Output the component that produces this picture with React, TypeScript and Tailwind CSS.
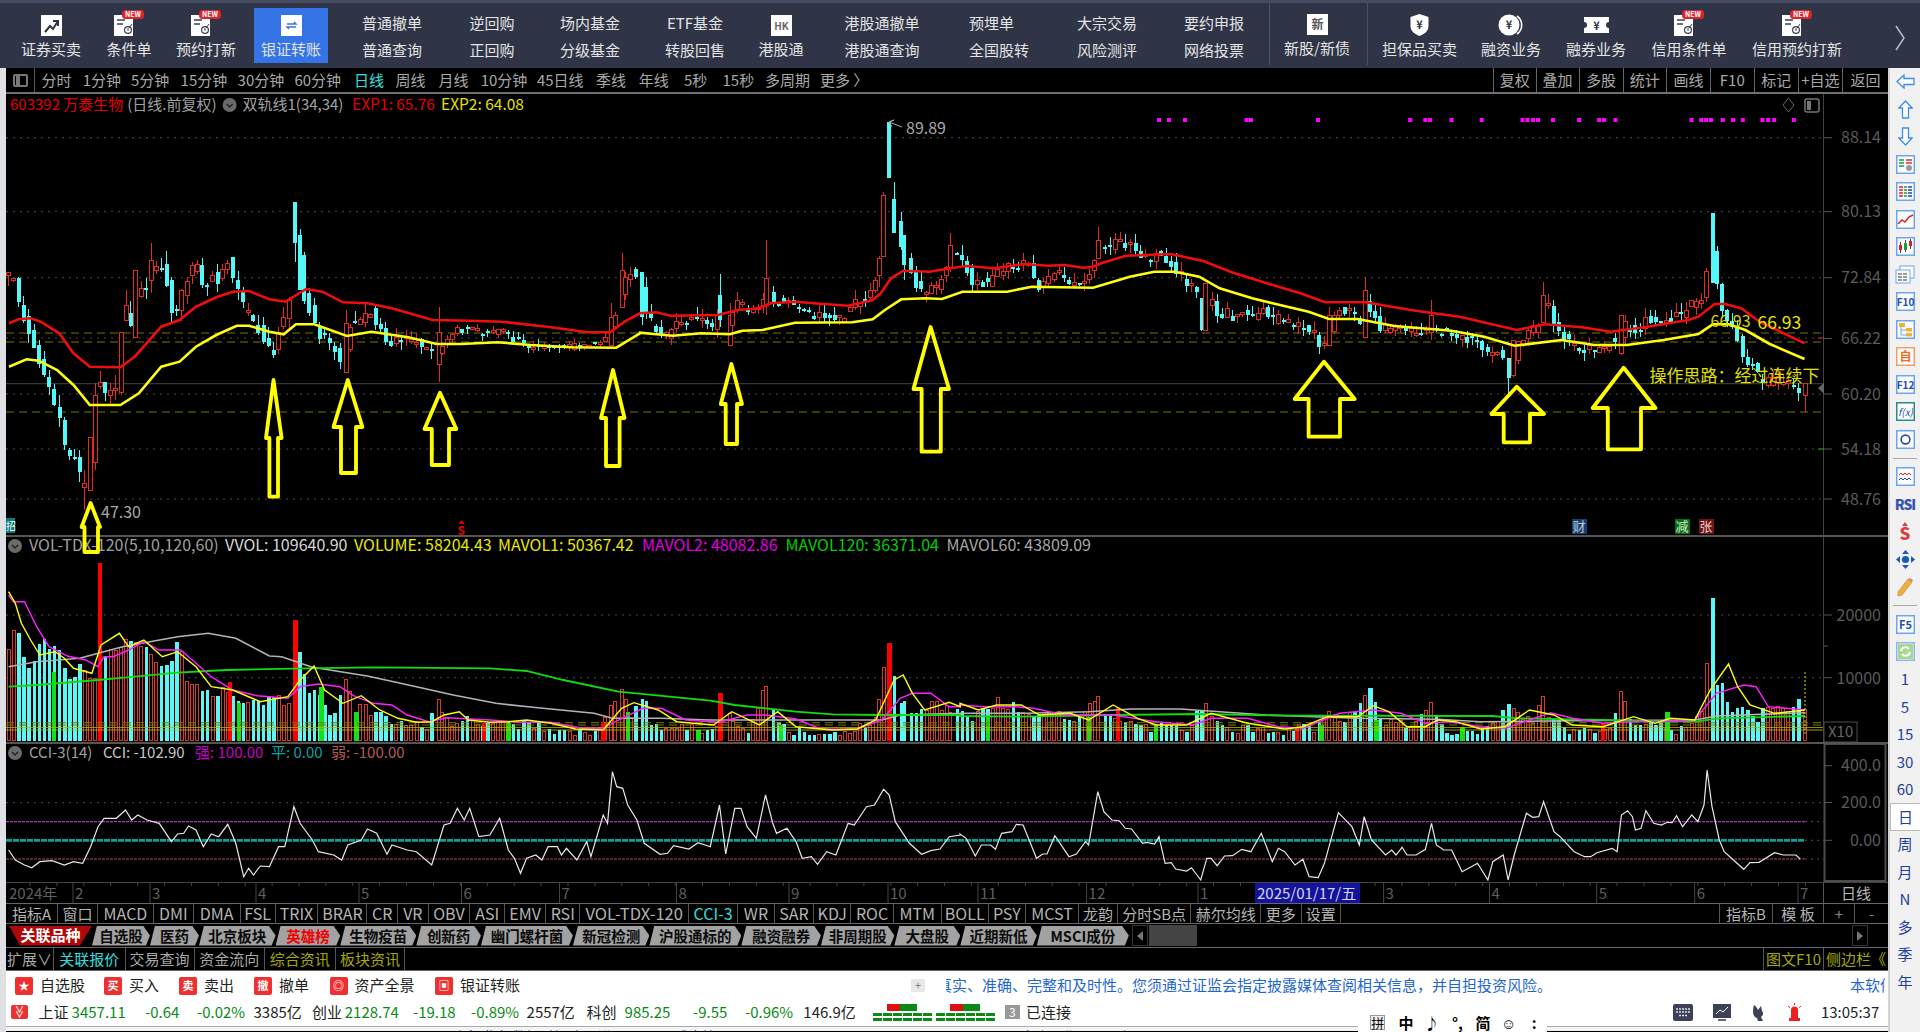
import type { ReactNode } from "react";

type Pt = [number, number];

// chart points were read off zoomed crops, so they are kept in crop space
const mainPts = (pts: Pt[], ox: number): Pt[] => pts.map(([x, y]) => [ox + x / 2.45, 90 + y / 3]);
const lowPts = (pts: Pt[], ox: number): Pt[] => pts.map(([x, y]) => [ox + x / 1.633, 530 + y / 3]);
const poly = (pts: Pt[]) => pts.map(([x, y]) => `${x.toFixed(1)},${y.toFixed(1)}`).join(" ");

const lerp = (pts: Pt[], x: number) => {
  if (x <= pts[0][0]) return pts[0][1];
  for (let i = 1; i < pts.length; i++) {
    if (x <= pts[i][0]) {
      const t = (x - pts[i - 1][0]) / (pts[i][0] - pts[i - 1][0]);
      return pts[i - 1][1] + t * (pts[i][1] - pts[i - 1][1]);
    }
  }
  return pts[pts.length - 1][1];
};

let seed = 20250117;
const rnd = () => {
  seed = (seed + 0x6d2b79f5) | 0;
  let t = Math.imul(seed ^ (seed >>> 15), 1 | seed);
  t = (t + Math.imul(t ^ (t >>> 7), 61 | t)) ^ t;
  return ((t ^ (t >>> 14)) >>> 0) / 4294967296;
};

const pricePath: Pt[] = [[9,275],[14,280],[20,307],[29,330],[35,347],[44,377],[53,398],[60,417],[65,447],[75,458],[80,473],[85,487],[90,460],[95,393],[100,377],[105,390],[110,392],[116,393],[121,363],[126,317],[131,323],[135,303],[141,283],[146,290],[151,270],[156,270],[162,267],[168,287],[173,320],[177,307],[182,290],[187,277],[192,267],[197,267],[203,287],[207,287],[212,277],[217,280],[223,270],[229,260],[234,280],[239,298],[244,310],[249,317],[254,323],[259,330],[264,337],[269,353],[275,353],[280,323],[285,323],[290,300],[295,223],[300,260],[305,303],[310,310],[315,323],[320,338],[325,340],[331,347],[336,350],[341,365],[346,343],[351,322],[356,325],[361,317],[366,313],[371,310],[376,323],[383,330],[388,347],[393,340],[398,340],[407,340],[417,342],[428,350],[433,357],[439,350],[445,340],[457,330],[469,330],[490,333],[504,330],[514,340],[530,347],[571,347],[604,340],[611,327],[617,310],[622,287],[627,273],[633,270],[642,293],[648,320],[654,323],[659,337],[664,338],[675,323],[681,320],[693,320],[705,323],[715,328],[720,307],[725,333],[730,323],[735,307],[740,303],[750,313],[761,307],[766,290],[771,298],[776,303],[786,298],[796,305],[801,313],[811,317],[822,317],[832,320],[844,317],[852,303],[862,300],[873,287],[879,265],[884,223],[889,150],[894,217],[898,233],[904,253],[915,282],[922,293],[930,290],[936,287],[940,278],[945,272],[950,253],[955,253],[960,257],[965,267],[971,280],[981,283],[991,282],[1001,270],[1006,263],[1011,268],[1017,267],[1027,263],[1033,278],[1038,287],[1052,277],[1057,272],[1062,278],[1073,285],[1083,280],[1093,265],[1098,250],[1104,243],[1113,247],[1119,238],[1124,245],[1135,247],[1140,258],[1150,258],[1160,250],[1165,260],[1171,263],[1175,268],[1187,282],[1196,290],[1202,313],[1206,303],[1211,300],[1216,317],[1227,312],[1232,317],[1242,313],[1252,317],[1262,310],[1273,320],[1282,318],[1292,323],[1304,327],[1315,335],[1319,345],[1324,345],[1329,330],[1333,313],[1339,310],[1349,310],[1360,320],[1365,303],[1370,313],[1380,327],[1390,330],[1406,330],[1415,335],[1431,327],[1437,330],[1447,333],[1464,338],[1480,343],[1488,355],[1498,350],[1509,367],[1513,360],[1519,343],[1529,332],[1539,327],[1543,303],[1549,307],[1554,323],[1566,340],[1580,350],[1602,348],[1621,333],[1627,323],[1637,335],[1645,320],[1662,323],[1672,317],[1684,313],[1692,303],[1702,297],[1713,247],[1719,303],[1724,312],[1733,333],[1739,343],[1744,358],[1749,362],[1754,367],[1760,380],[1764,383],[1776,378],[1786,383],[1795,385],[1800,392],[1805,390]];

// x, bodyTop, bodyBottom, wickTop, wickBottom, red?
const bigCandles: [number, number, number, number, number, boolean][] = [
  [90,437,490,437,490,true],[84.5,483,487,470,510,true],[121,332,392,332,395,true],[135.5,270,337,270,337,true],[126,305,320,290,320,true],[151,260,280,243,293,true],
  [295,202,243,202,262,false],[300,235,290,229,290,false],[346,323,372,310,372,true],[439,332,364,307,382,true],[611,317,345,303,345,true],[622,270,307,253,307,true],
  [642,272,317,272,325,false],[720,295,320,274,327,false],[730,315,345,303,345,true],[766,278,305,240,315,true],[883.7,195,256,192,256,true],[889,122,178,122,178,false],
  [894,199,233,182,233,false],[898,215,243,214,253,false],[904,235,265,235,280,false],[879,258,275,256,287,true],[950,245,267,233,272,true],[1098,240,258,227,258,true],
  [1201.6,298,330,298,331,false],[1205.7,283,330,283,330,true],[1329,315,345,307,345,true],[1365,290,337,277,337,true],[1431,315,332,300,340,true],[1508.6,358,378,358,394,false],
  [1513.5,340,375,340,377,true],[1543,295,322,282,322,true],[1621,315,353,315,355,true],[1712.6,213,283,213,283,false],[1805,383,395,383,412,true],
];

const PITCH = 5.1;
const candles = Array.from({ length: 353 }, (_, i) => {
  const x = 8.5 + i * PITCH;
  const big = bigCandles.find((c) => Math.abs(c[0] - x) <= PITCH / 2);
  if (big) return { x: big[0], top: big[1], bot: big[2], wt: big[3], wb: big[4], red: big[5] };
  const amp = x < 300 ? 12 : x < 440 ? 9 : x < 620 ? 6 : 9;
  const open = lerp(pricePath, x - PITCH) + (rnd() - 0.5) * amp;
  const close = lerp(pricePath, x) + (rnd() - 0.5) * amp;
  const red = close < open;
  const top = Math.min(open, close);
  const bot = Math.max(Math.max(open, close), top + 2);
  return { x, top, bot, wt: top - rnd() * amp * 1.1, wb: bot + rnd() * amp * 0.9, red };
});

const redLine = [
  ...mainPts([[22,700],[45,688],[75,685],[100,695],[145,730],[180,790],[220,830],[295,832],[330,800],[395,710],[440,690],[480,650],[530,622],[570,605],[610,603],[660,628],[700,635],[750,597],[790,605],[840,637],[900,640],[960,655],[1060,690],[1150,692],[1230,695],[1350,712],[1440,727],[1495,727],[1530,695],[1568,670]], 0),
  ...mainPts([[0,670],[40,667],[75,677],[190,675],[240,660],[290,655],[320,640],[380,635],[450,642],[510,647],[570,630],[590,610],[615,565],[645,542],[710,545],[760,535],[800,528],[870,535],[940,522],[1000,527],[1040,525],[1085,533],[1110,530],[1130,520],[1190,497],[1300,492],[1380,513],[1450,547],[1568,592]], 640),
  ...mainPts([[0,592],[50,610],[110,637],[210,637],[320,660],[440,680],[580,720],[650,703],[740,712],[810,725],[900,710],[1000,690],[1025,680],[1065,642],[1090,642],[1130,655],[1175,695],[1285,760]], 1280),
];
const yellowLine = [
  ...mainPts([[22,830],[65,808],[95,812],[140,840],[180,885],[220,945],[295,945],[340,910],[395,830],[440,815],[480,770],[530,735],[580,707],[610,707],[660,725],[695,733],[725,703],[770,703],[850,738],[910,725],[1000,742],[1070,762],[1130,762],[1220,757],[1300,765],[1400,772],[1510,773],[1568,730]], 0),
  ...mainPts([[0,728],[80,737],[150,730],[220,733],[250,722],[300,720],[380,698],[520,697],[570,688],[600,660],[640,628],[700,625],[740,627],[790,605],[900,605],[960,590],[1110,593],[1200,560],[1260,545],[1310,545],[1370,560],[1420,595],[1500,625],[1568,645]], 640),
  ...mainPts([[0,645],[70,665],[120,687],[190,687],[280,708],[420,722],[500,740],[575,767],[690,750],[770,765],[850,765],[940,750],[1025,732],[1060,703],[1100,703],[1140,720],[1200,762],[1285,807]], 1280),
];

const pinkDots = [1159,1169,1185,1246.5,1251,...[93,319,356,368,420,494,594,606,620,632,669,733,782,794,822,1008,1032,1044,1056,1085,1110,1134,1182,1196,1211,1259].map((x) => 1280 + x / 2.45)];

const volEnvelope = [
  ...lowPts([[15,340],[25,260],[35,340],[50,430],[60,350],[70,320],[85,340],[100,340],[110,440],[120,430],[130,390],[150,440],[165,430],[175,330],[190,340],[205,315],[220,330],[235,325],[250,380],[265,385],[280,380],[290,300],[305,430],[325,470],[340,470],[350,495],[365,460],[380,480],[395,515],[415,490],[430,520],[450,470],[465,530],[480,480],[490,365],[505,475],[520,470],[535,540],[550,520],[565,430],[580,540],[595,500],[610,545],[625,540],[640,570],[660,575],[680,570],[700,575],[715,490],[725,545],[745,580],[765,540],[780,575],[800,570],[820,555],[840,580],[860,565],[880,580],[900,590],[920,595],[940,600],[960,600],[985,575],[1000,505],[1015,465],[1030,545],[1050,485],[1065,570],[1085,575],[1110,580],[1130,580],[1150,595],[1165,585],[1176,560],[1190,540],[1210,580],[1225,590],[1250,455],[1265,540],[1280,580],[1300,590],[1320,590],[1340,600],[1360,605],[1380,600],[1410,570],[1430,560],[1442,385],[1452,500],[1460,425],[1470,490],[1485,535],[1500,545],[1520,500],[1540,525],[1560,520]], 0),
  ...lowPts([[5,525],[20,550],[50,520],[65,487],[75,530],[90,510],[105,545],[120,560],[150,520],[160,540],[185,580],[215,495],[226,495],[240,545],[258,560],[275,570],[300,575],[320,585],[335,560],[355,580],[370,585],[400,505],[420,560],[440,590],[470,585],[500,590],[530,600],[560,565],[580,590],[600,530],[610,545],[630,560],[660,485],[670,475],[690,565],[720,570],[735,590],[770,510],[780,550],[795,595],[815,590],[840,600],[870,580],[895,510],[905,515],[935,570],[953,483],[965,560],[1000,590],[1030,580],[1060,590],[1080,480],[1100,580],[1120,570],[1140,560],[1155,580],[1175,590],[1195,560],[1211,540],[1220,560],[1229,560],[1240,410],[1250,480],[1260,525],[1275,520],[1283,510],[1298,565],[1310,530],[1330,515],[1345,530],[1370,505],[1378,515]], 960),
];
const volBars = candles.map((c) => ({ x: c.x, top: Math.min(lerp(volEnvelope, c.x) + rnd() * 9, 735), red: c.red }));

// R solid red, G solid green, C solid cyan, H hollow red
const volSpecial: [number, number, string][] = [
  ...lowPts([[163,100],[482,270],[375,455],[1176,490],[1452,340],[985,575],[790,580]], 0).map(([x, y]): [number, number, string] => [x, y, "R"]),
  ...lowPts([[258,535],[1050,580],[550,590]], 960).map(([x, y]): [number, number, string] => [x, y, "R"]),
  ...lowPts([[88,425],[390,520],[525,470],[582,545],[830,580],[1025,545],[1140,600],[1275,585]], 0).map(([x, y]): [number, number, string] => [x, y, "G"]),
  ...lowPts([[45,560],[210,560],[320,585],[590,585],[680,570],[820,590],[1155,545]], 960).map(([x, y]): [number, number, string] => [x, y, "G"]),
  ...lowPts([[1229,205],[670,475]], 960).map(([x, y]): [number, number, string] => [x, y, "C"]),
  ...lowPts([[490,365]], 0).map(([x, y]): [number, number, string] => [x, y, "C"]),
  ...lowPts([[1220,400]], 960).map(([x, y]): [number, number, string] => [x, y, "H"]),
];

const volYellow = [
  ...lowPts([[14,185],[25,220],[35,280],[50,330],[65,375],[90,365],[105,385],[120,415],[150,430],[165,345],[195,310],[210,350],[235,330],[265,380],[290,365],[320,410],[345,470],[380,480],[425,515],[470,500],[490,450],[513,408],[530,480],[560,520],[590,497],[620,540],[650,565],[680,577],[705,575],[725,555],[750,545],[765,570],[800,577],[830,575],[860,570],[900,580],[940,597],[985,600],[1015,535],[1035,518],[1075,540],[1105,575],[1165,585],[1195,545],[1240,585],[1270,545],[1300,590],[1360,600],[1400,597],[1430,570],[1460,450],[1475,435],[1490,490],[1510,540],[1550,517],[1568,530]], 0),
  ...lowPts([[0,520],[30,540],[60,525],[100,525],[130,555],[180,550],[210,570],[250,525],[290,565],[320,585],[370,585],[410,550],[470,580],[530,597],[560,590],[600,560],[650,560],[675,527],[700,545],[730,590],[760,590],[780,570],[810,575],[850,597],[890,590],[930,540],[970,555],[1000,585],[1050,590],[1100,560],[1135,580],[1160,565],[1200,570],[1225,480],[1255,402],[1270,470],[1290,525],[1330,550],[1380,540]], 960),
];
const volPink = [
  ...lowPts([[14,195],[22,215],[40,215],[60,290],[80,350],[110,378],[140,390],[160,410],[170,380],[185,380],[210,360],[235,335],[260,360],[295,360],[320,400],[345,440],[380,480],[420,497],[470,505],[490,470],[520,462],[555,470],[580,500],[610,520],[640,525],[665,555],[700,575],[730,563],[800,570],[850,577],[900,577],[950,595],[985,595],[1010,570],[1050,535],[1080,535],[1120,570],[1175,577],[1220,555],[1250,555],[1300,567],[1340,597],[1400,597],[1440,570],[1470,505],[1490,490],[1520,490],[1550,530],[1568,530]], 0),
  ...lowPts([[0,525],[40,530],[90,530],[120,535],[170,555],[250,555],[320,575],[380,585],[410,565],[470,565],[520,590],[560,595],[620,550],[675,540],[720,550],[760,580],[800,575],[850,590],[890,595],[930,570],[965,548],[1000,565],[1050,580],[1100,575],[1150,575],[1200,570],[1235,490],[1280,465],[1300,470],[1320,530],[1380,540]], 960),
];
const volGreen = [
  ...lowPts([[14,470],[60,465],[160,450],[220,440],[290,428],[370,420],[500,415],[610,412],[800,415],[860,423],[920,450],[1010,485],[1160,512],[1200,525],[1300,545],[1360,553],[1440,555],[1470,555],[1568,555]], 0),
  ...lowPts([[0,558],[100,560],[250,555],[390,552],[540,557],[870,558],[910,565],[1000,568],[1200,575],[1240,565],[1380,558]], 960),
];
const volGray = [
  ...lowPts([[14,410],[60,395],[130,385],[200,350],[290,320],[340,310],[385,325],[440,378],[460,380],[510,412],[600,438],[680,470],[740,495],[810,520],[870,532],[970,550],[1000,565],[1080,565],[1160,570],[1300,570],[1440,570],[1470,555],[1568,550]], 0),
  ...lowPts([[0,550],[110,550],[210,545],[280,537],[360,537],[500,555],[650,565],[780,568],[850,575],[1000,572],[1200,570],[1235,558],[1380,548]], 960),
];
const cciLine = [
  ...lowPts([[14,960],[25,990],[40,1005],[52,1013],[65,995],[85,992],[105,1005],[120,995],[135,1000],[148,950],[160,890],[170,865],[190,865],[205,840],[215,870],[225,855],[240,870],[260,880],[280,935],[290,912],[300,910],[308,888],[320,900],[332,950],[345,912],[357,920],[372,883],[385,940],[398,1040],[406,1015],[414,1035],[425,1008],[440,1010],[455,950],[465,950],[480,830],[490,880],[510,930],[520,965],[545,975],[558,990],[568,945],[590,930],[600,897],[615,910],[632,973],[640,945],[665,960],[680,965],[705,1005],[725,885],[735,880],[747,835],[758,870],[767,835],[782,920],[800,915],[816,865],[830,960],[840,985],[850,1030],[860,985],[875,975],[885,990],[895,950],[910,950],[917,975],[925,955],[942,990],[958,935],[965,980],[985,855],[992,880],[1000,725],[1007,770],[1017,775],[1025,825],[1040,870],[1052,940],[1078,973],[1090,970],[1100,947],[1125,957],[1140,938],[1160,950],[1175,825],[1185,972],[1200,835],[1210,835],[1220,890],[1235,925],[1250,795],[1262,880],[1268,910],[1285,895],[1300,935],[1310,985],[1325,980],[1335,1003],[1350,965],[1365,975],[1385,880],[1395,885],[1415,830],[1428,825],[1443,778],[1452,795],[1462,875],[1485,940],[1505,973],[1520,962],[1535,957],[1550,920],[1568,915]], 0),
  ...lowPts([[0,912],[10,925],[25,978],[35,945],[50,945],[58,958],[68,910],[85,905],[92,883],[103,885],[125,985],[135,972],[142,972],[155,917],[178,980],[190,972],[205,935],[210,945],[225,785],[235,845],[248,870],[260,872],[270,895],[280,897],[298,940],[305,937],[318,942],[325,920],[335,1000],[345,998],[352,1017],[370,1023],[378,1013],[393,1050],[403,985],[410,985],[420,1007],[432,978],[445,977],[460,958],[475,965],[492,910],[510,995],[520,955],[530,965],[547,1005],[560,988],[570,1040],[585,1043],[595,1000],[618,848],[640,890],[652,945],[660,860],[672,930],[695,975],[705,960],[712,975],[722,952],[730,975],[745,975],[760,958],[770,880],[778,945],[790,960],[803,960],[820,1025],[835,1010],[845,1000],[862,1050],[870,995],[887,975],[895,1050],[905,975],[925,850],[935,862],[945,860],[953,815],[970,905],[980,920],[1003,965],[1020,980],[1030,980],[1040,968],[1065,955],[1073,965],[1080,855],[1090,842],[1098,860],[1103,900],[1112,895],[1120,842],[1133,880],[1145,885],[1155,877],[1163,878],[1170,857],[1180,890],[1195,855],[1205,875],[1215,825],[1220,720],[1228,830],[1240,930],[1248,965],[1280,1018],[1290,998],[1305,997],[1330,968],[1345,975],[1365,975],[1372,987]], 960),
];

// tipX, tipY, headY, headL, headR, shaftL, shaftR, bottom
const arrows: number[][] = [
  [90.6,503,527,81.6,100,84.5,98,552],[273.5,380,438,266,281.6,269.4,278,496.7],[347.8,380,427,333.5,362.4,341,356,473],[440,392.7,429,424.5,456.3,431.8,449,465],
  [613,370,418,601,624.5,606,619.6,466],[731.4,364,404,720.8,742,725.7,737,444],[930.6,327,389,913.5,949,921.6,940.8,451.7],[1324,361.7,399,1294.7,1354.7,1308.6,1340,436.7],
  [1516.7,386.7,414,1491.4,1544,1503.7,1530,442.3],[1623.7,367.7,408,1592.7,1655.5,1607.8,1641,449.3],
];

const monthTicks = [75,152,258,361,463.5,561.5,678.5,791,890,980,1088.6,1200,1385.6,1491.5,1598.7,1696.7,1800];
const monthLabels = ["2","3","4","5","6","7","8","9","10","11","12","1","3","4","5","6","7"];

function CircleMenu({ x, y }: { x: number; y: number }) {
  return (
    <g>
      <circle cx={x} cy={y} r="7" fill="#6a6a6a" />
      <polyline points={`${x - 3},${y - 1} ${x},${y + 2} ${x + 3},${y - 1}`} fill="none" stroke="#222" strokeWidth="1.4" />
    </g>
  );
}

function MainChart() {
  return (
    <svg viewBox="6 94 1882 441" className="block h-[441px] w-[1882px]">
      {[137.7,211.7,277.7,338,394,449,499].map((y) => (
        <line key={y} x1="6" x2="1824" y1={y} y2={y} stroke="#4a4a4a" strokeDasharray="2 5" />
      ))}
      <line x1="6" x2="1824" y1="333" y2="333" stroke="#777700" strokeDasharray="8 5" />
      <line x1="6" x2="1824" y1="342" y2="342" stroke="#777700" strokeDasharray="8 5" />
      <line x1="6" x2="1824" y1="412" y2="412" stroke="#777700" strokeDasharray="8 5" />
      <line x1="6" x2="1824" y1="383.7" y2="383.7" stroke="#444" />
      {candles.map((c, i) =>
        c.red ? (
          <g key={i} stroke="#e02c24" shapeRendering="crispEdges">
            <line x1={c.x} x2={c.x} y1={c.wt} y2={c.top} />
            <line x1={c.x} x2={c.x} y1={c.bot} y2={c.wb} />
            <rect x={c.x - 2} y={c.top} width="4" height={c.bot - c.top} fill="#000" />
          </g>
        ) : (
          <g key={i} shapeRendering="crispEdges">
            <line x1={c.x} x2={c.x} y1={c.wt} y2={c.wb} stroke="#54f8f8" />
            <rect x={c.x - 2} y={c.top} width="4" height={c.bot - c.top} fill="#54f8f8" />
          </g>
        ),
      )}
      <polyline points={poly(redLine)} fill="none" stroke="#f00d0d" strokeWidth="2.6" />
      <polyline points={poly(yellowLine)} fill="none" stroke="#ffff10" strokeWidth="2.6" />
      {pinkDots.map((x) => (
        <rect key={x} x={x - 2} y="118" width="4" height="4" fill="#ff00ff" />
      ))}
      <polyline points="902,127 889,122 894,120 889,122 892,127" fill="none" stroke="#aaa" />
      <text x="906" y="134" fontSize="16" fill="#a8a8a8">89.89</text>
      <text x="101" y="518" fontSize="16" fill="#a8a8a8">47.30</text>
      <text x="1710.6" y="327" fontSize="16" fill="#d8d800">66.93</text>
      <text x="1757.5" y="329" fontSize="17.5" fill="#e8e800">66.93</text>
      <text x="1649.4" y="382" fontSize="17" fill="#e0e000">操作思路：经过连续下</text>
      <rect x="1824" y="94" width="64" height="441" fill="#000" />
      <line x1="1823.5" x2="1823.5" y1="94" y2="535" stroke="#444" />
      {[["88.14",137.7],["80.13",211.7],["72.84",277.7],["66.22",338.5],["60.20",394],["54.18",449],["48.76",499]].map(([t, y]) => (
        <g key={t as string}>
          <line x1="1824" x2="1832" y1={y} y2={y} stroke="#555" />
          <text x="1881" y={(y as number) + 5.5} fontSize="16" textAnchor="end" fill="#5a5a5a">{t}</text>
        </g>
      ))}
      <polygon points="1818,388 1824,383 1824,394" fill="#666" />
      <line x1="1818" x2="1824" y1="338" y2="338" stroke="#c33" />
      <line x1="1818" x2="1824" y1="449" y2="449" stroke="#2a2" />
      <polygon points="1788.5,98 1794,105 1788.5,112 1783,105" fill="none" stroke="#666" />
      <rect x="1805" y="99" width="14" height="13" rx="2" fill="none" stroke="#777" strokeWidth="1.5" />
      <rect x="1807" y="101" width="4" height="9" fill="#777" />
      <text x="10" y="110" fontSize="15" fill="#e00000">603392 万泰生物</text>
      <text x="127.3" y="110" fontSize="15" fill="#a0a0a0">(日线.前复权)</text>
      <CircleMenu x={229.6} y={105} />
      <text x="242.5" y="110" fontSize="15" fill="#a0a0a0">双轨线1(34,34)</text>
      <text x="352" y="110" fontSize="15.5" fill="#e00000">EXP1: 65.76</text>
      <text x="441" y="110" fontSize="15.5" fill="#e0e000">EXP2: 64.08</text>
      <rect x="6" y="518" width="9" height="15" fill="#0a7a7a" />
      <text x="6" y="530" fontSize="10" fill="#fff">招</text>
      <polygon points="461.6,520 458.6,524 464.6,524" fill="#e00000" />
      <text x="457.5" y="535" fontSize="12" fontWeight="700" fill="#e00000">S</text>
      <rect x="1572" y="519" width="15" height="15" fill="#14406e" />
      <text x="1572.5" y="531" fontSize="13" fill="#bcd">财</text>
      <rect x="1675" y="519" width="15" height="15" fill="#0c6a14" />
      <text x="1675.5" y="531" fontSize="13" fill="#cec">减</text>
      <rect x="1699" y="519" width="15" height="15" fill="#6e1414" />
      <text x="1699.5" y="531" fontSize="13" fill="#ecc">张</text>
    </svg>
  );
}

function VolumeChart() {
  return (
    <svg viewBox="6 537 1882 205" className="block h-[205px] w-[1882px]">
      {[615,677.7].map((y) => (
        <line key={y} x1="6" x2="1824" y1={y} y2={y} stroke="#4a4a4a" strokeDasharray="2 5" />
      ))}
      {volBars.map((b, i) =>
        b.red ? (
          <rect key={i} x={b.x - 1.5} y={b.top} width="3" height={740.5 - b.top} fill="#000" stroke="#d8392c" shapeRendering="crispEdges" />
        ) : (
          <rect key={i} x={b.x - 1.5} y={b.top} width="3.4" height={741 - b.top} fill="#5cf6f6" shapeRendering="crispEdges" />
        ),
      )}
      {volSpecial.map(([x, y, kind], i) =>
        kind === "H" ? (
          <rect key={i} x={x - 1.5} y={y} width="3" height={740.5 - y} fill="#000" stroke="#d8392c" shapeRendering="crispEdges" />
        ) : (
          <rect key={i} x={x - 2} y={y} width="4.4" height={741 - y} fill={kind === "R" ? "#ff0000" : kind === "G" ? "#14e014" : "#5cf6f6"} shapeRendering="crispEdges" />
        ),
      )}
      <line x1="6" x2="1850" y1="722.7" y2="722.7" stroke="#7a7a00" strokeDasharray="8 5" />
      <line x1="6" x2="1850" y1="725" y2="725" stroke="#7a7a00" strokeDasharray="8 5" />
      <line x1="6" x2="1850" y1="727.5" y2="727.5" stroke="#b4b400" strokeWidth="0.8" />
      <line x1="6" x2="1850" y1="730" y2="730" stroke="#c8c800" strokeWidth="0.8" />
      <polyline points={poly(volGray)} fill="none" stroke="#b4b4b4" strokeWidth="1.6" />
      <polyline points={poly(volGreen)} fill="none" stroke="#0fdc0f" strokeWidth="1.8" />
      <polyline points={poly(volPink)} fill="none" stroke="#ff20ff" strokeWidth="1.4" />
      <polyline points={poly(volYellow)} fill="none" stroke="#ffff10" strokeWidth="1.4" />
      <line x1="1805" x2="1805" y1="672" y2="735" stroke="#d8d800" strokeDasharray="2 2" />
      <rect x="1824" y="537" width="64" height="205" fill="#000" />
      <line x1="1823.5" x2="1823.5" y1="537" y2="742" stroke="#444" />
      <line x1="1824" x2="1832" y1="615" y2="615" stroke="#555" />
      <text x="1881" y="621" fontSize="16" textAnchor="end" fill="#5a5a5a">20000</text>
      <line x1="1824" x2="1832" y1="677.7" y2="677.7" stroke="#555" />
      <text x="1881" y="683.5" fontSize="16" textAnchor="end" fill="#5a5a5a">10000</text>
      <line x1="1824" x2="1828" y1="646" y2="646" stroke="#555" />
      <rect x="1824" y="722" width="33" height="20" fill="#000" stroke="#4d4d4d" />
      <text x="1828" y="737" fontSize="15" fill="#666">X10</text>
      <CircleMenu x={15} y={546} />
      <text x="29" y="551" fontSize="16" fill="#a0a0a0">VOL-TDX-120(5,10,120,60)</text>
      <text x="225" y="551" fontSize="16" fill="#d8d8d8">VVOL: 109640.90</text>
      <text x="354" y="551" fontSize="16" fill="#e8e800">VOLUME: 58204.43</text>
      <text x="498" y="551" fontSize="16" fill="#e8e800">MAVOL1: 50367.42</text>
      <text x="642" y="551" fontSize="16" fill="#e000e0">MAVOL2: 48082.86</text>
      <text x="785.6" y="551" fontSize="16" fill="#00d000">MAVOL120: 36371.04</text>
      <text x="946.5" y="551" fontSize="16" fill="#a8a8a8">MAVOL60: 43809.09</text>
    </svg>
  );
}

function CciChart() {
  return (
    <svg viewBox="6 744 1882 138" className="block h-[138px] w-[1882px]">
      <line x1="6" x2="1824" y1="802.7" y2="802.7" stroke="#4a4a4a" strokeDasharray="2 5" />
      <line x1="6" x2="1805" y1="821.7" y2="821.7" stroke="#b030b0" strokeWidth="1.2" strokeDasharray="3 1" />
      <line x1="6" x2="1805" y1="840.3" y2="840.3" stroke="#0aa0a0" strokeWidth="2.8" strokeDasharray="6 1" />
      <line x1="6" x2="1805" y1="859" y2="859" stroke="#a85050" strokeWidth="1.2" strokeDasharray="3 1" />
      <line x1="1805" x2="1824" y1="821.7" y2="821.7" stroke="#555" strokeDasharray="2 4" />
      <line x1="1805" x2="1824" y1="840.3" y2="840.3" stroke="#555" strokeDasharray="2 4" />
      <line x1="1805" x2="1824" y1="859" y2="859" stroke="#555" strokeDasharray="2 4" />
      <polyline points={poly(cciLine)} fill="none" stroke="#e8e8e8" strokeWidth="1.2" />
      <rect x="1824.5" y="744" width="61" height="137" fill="#000" stroke="#4d4d4d" strokeWidth="2" />
      {[["400.0",765.7],["200.0",802.5],["0.00",840.3]].map(([t, y]) => (
        <g key={t as string}>
          <line x1="1824" x2="1832" y1={y} y2={y} stroke="#555" />
          <text x="1881" y={(y as number) + 5.5} fontSize="16" textAnchor="end" fill="#5a5a5a">{t}</text>
        </g>
      ))}
      <CircleMenu x={15} y={753} />
      <text x="29" y="758" fontSize="15" fill="#a0a0a0">CCI-3(14)</text>
      <text x="103" y="758" fontSize="15" fill="#c8c8c8">CCI: -102.90</text>
      <text x="195" y="758" fontSize="15" fill="#c800c8">强: 100.00</text>
      <text x="271" y="758" fontSize="15" fill="#0aa0a0">平: 0.00</text>
      <text x="331" y="758" fontSize="15" fill="#b05a5a">弱: -100.00</text>
    </svg>
  );
}

function TimeAxis() {
  return (
    <svg viewBox="6 883 1882 20" className="block h-[20px] w-[1882px]">
      {Array.from({ length: 67 }, (_, i) => 30 + i * 26.9).map((x) => (
        <line key={x} x1={x} x2={x} y1="883" y2="886" stroke="#444" />
      ))}
      {monthTicks.map((x, i) => (
        <g key={x}>
          <line x1={x - 2} x2={x - 2} y1="883" y2="903" stroke="#444" />
          <text x={x} y="899" fontSize="15" fill="#5f5f5f">{monthLabels[i]}</text>
        </g>
      ))}
      <text x="9" y="899" fontSize="15" fill="#5f5f5f">2024年</text>
      <rect x="1255" y="883" width="105" height="20" fill="#12129c" />
      <text x="1257" y="899" fontSize="15" fill="#d8d8e8">2025/01/17/五</text>
      <line x1="1823.5" x2="1823.5" y1="883" y2="903" stroke="#555" />
      <text x="1856" y="899" fontSize="15" textAnchor="middle" fill="#b8b8b8">日线</text>
    </svg>
  );
}

function NewDoc() {
  return (
    <svg width="34" height="26" viewBox="0 0 34 26">
      <path d="M2 5h19v21H2z" fill="#fff" />
      <path d="M5 10h8M5 14h6" stroke="#3a4052" strokeWidth="1.4" />
      <circle cx="16" cy="20" r="3.4" fill="none" stroke="#3a4052" strokeWidth="1.2" />
      <path d="M16 18v3M20 14l-3 4" stroke="#3a4052" />
      <rect x="10" y="0" width="22" height="9" rx="3.5" fill="#d9252b" />
      <text x="21" y="7.4" fontSize="7" fontWeight="700" textAnchor="middle" fill="#fff">NEW</text>
    </svg>
  );
}

function PageIcon({ children }: { children: ReactNode }) {
  return (
    <svg width="21" height="21" viewBox="0 0 21 21">
      <rect width="21" height="21" fill="#fff" />
      {children}
    </svg>
  );
}

function ToolCell({ w, label, icon, active }: { w: string; label: string; icon: ReactNode; active?: boolean }) {
  return (
    <div className={`flex h-[55px] flex-col items-center justify-end ${w} ${active ? "bg-[#3574e6]" : ""}`}>
      <div className="flex h-[30px] items-end pb-[2px]">{icon}</div>
      <span className="h-[25px] text-[15px] leading-[22px] text-[#e4e4e4]">{label}</span>
    </div>
  );
}

function PairCell({ w, top, bottom, left }: { w: string; top: string; bottom: string; left?: boolean }) {
  return (
    <div className={`flex h-[55px] flex-col justify-center gap-[6px] text-[15px] leading-[21px] text-[#e4e4e4] ${w} ${left ? "items-start" : "items-center"}`}>
      <span>{top}</span>
      <span>{bottom}</span>
    </div>
  );
}

function Toolbar() {
  return (
    <div className="flex h-[68px] items-start border-t-[3px] border-[#454b60] bg-[#2f3447] pl-[12px] pt-[5px]">
      <ToolCell
        w="w-[78px]"
        label="证券买卖"
        icon={
          <PageIcon>
            <path d="M4 17l5-6 3 3 5-8M12 6h5v5" fill="none" stroke="#2f3447" strokeWidth="2" />
          </PageIcon>
        }
      />
      <ToolCell w="w-[78px]" label="条件单" icon={<NewDoc />} />
      <ToolCell w="w-[76px]" label="预约打新" icon={<NewDoc />} />
      <div className="w-[10px]" />
      <ToolCell
        w="w-[74px]"
        label="银证转账"
        active
        icon={
          <PageIcon>
            <path d="M6 9h9l-2-2M15 12H6l2 2" fill="none" stroke="#3574e6" strokeWidth="1.4" />
          </PageIcon>
        }
      />
      <PairCell w="w-[128px]" top="普通撤单" bottom="普通查询" />
      <PairCell w="w-[72px]" top="逆回购" bottom="正回购" />
      <PairCell w="w-[124px]" top="场内基金" bottom="分级基金" />
      <PairCell w="w-[86px]" top="ETF基金" bottom="转股回售" />
      <ToolCell
        w="w-[86px]"
        label="港股通"
        icon={
          <PageIcon>
            <text x="10.5" y="14.5" fontSize="10" fontWeight="700" textAnchor="middle" fill="#666">HK</text>
          </PageIcon>
        }
      />
      <PairCell w="w-[116px]" top="港股通撤单" bottom="港股通查询" />
      <div className="w-[29px]" />
      <PairCell w="w-[108px]" left top="预埋单" bottom="全国股转" />
      <PairCell w="w-[107px]" left top="大宗交易" bottom="风险测评" />
      <PairCell w="w-[85px]" left top="要约申报" bottom="网络投票" />
      <div className="flex h-[62px] -mt-[5px] items-center border-x border-[#4b5166] pr-[3px]">
        <ToolCell
          w="w-[94px]"
          label="新股/新债"
          icon={
            <PageIcon>
              <text x="10.5" y="15" fontSize="12" fontWeight="700" textAnchor="middle" fill="#555">新</text>
            </PageIcon>
          }
        />
      </div>
      <ToolCell
        w="w-[103px]"
        label="担保品买卖"
        icon={
          <svg width="19" height="22" viewBox="0 0 19 22">
            <path d="M9.5 0l9 3v9c0 5-4 8-9 10-5-2-9-5-9-10V3z" fill="#fff" />
            <text x="9.5" y="14.5" fontSize="11" fontWeight="700" textAnchor="middle" fill="#2f3447">¥</text>
          </svg>
        }
      />
      <ToolCell
        w="w-[80px]"
        label="融资业务"
        icon={
          <svg width="26" height="22" viewBox="0 0 26 22">
            <circle cx="11" cy="11" r="10.5" fill="#fff" />
            <path d="M19 2a11 11 0 0 1 0 18" fill="none" stroke="#fff" strokeWidth="1.6" />
            <text x="11" y="15" fontSize="11" fontWeight="700" textAnchor="middle" fill="#2f3447">¥</text>
          </svg>
        }
      />
      <ToolCell
        w="w-[90px]"
        label="融券业务"
        icon={
          <svg width="25" height="16" viewBox="0 0 25 16" className="mb-[3px]">
            <path d="M0 0h25v5a3 3 0 0 0 0 6v5H0v-5a3 3 0 0 0 0-6z" fill="#fff" />
            <text x="12.5" y="12.5" fontSize="11" fontWeight="700" textAnchor="middle" fill="#2f3447">¥</text>
          </svg>
        }
      />
      <ToolCell w="w-[96px]" label="信用条件单" icon={<NewDoc />} />
      <ToolCell w="w-[120px]" label="信用预约打新" icon={<NewDoc />} />
      <svg width="12" height="26" viewBox="0 0 12 26" className="ml-[37px] mt-[17px]">
        <polyline points="2,1 10,13 2,25" fill="none" stroke="#b8bcc6" strokeWidth="1.5" />
      </svg>
    </div>
  );
}

const periods: [string, string, string?][] = [
  ["分时", "w-[41.1px]"],["1分钟", "w-[48.3px]"],["5分钟", "w-[49.6px]"],["15分钟", "w-[57px]"],["30分钟", "w-[56.9px]"],["60分钟", "w-[59.5px]"],
  ["日线", "w-[41.6px]", "text-[#30e0e0]"],["周线", "w-[42.9px]"],["月线", "w-[42.2px]"],["10分钟", "w-[56.3px]"],["45日线", "w-[59px]"],["季线", "w-[42.7px]"],
  ["年线", "w-[45.3px]"],["5秒", "w-[38.6px]"],["15秒", "w-[42.4px]"],["多周期", "w-[55px]"],["更多 〉", "w-[60px]"],
];
const chartTools: [string, string][] = [
  ["复权", "w-[42.6px]"],["叠加", "w-[42.9px]"],["多股", "w-[44.1px]"],["统计", "w-[43.4px]"],["画线", "w-[44px]"],["F10", "w-[43.6px]"],["标记", "w-[44.1px]"],["+自选", "w-[44.3px]"],["返回", "w-[46px]"],
];

function PeriodBar() {
  return (
    <div className="flex h-[26px] items-stretch border-b-2 border-[#6e6e6e] bg-black text-[15px] leading-[24px] text-[#a8a8a8]">
      <div className="flex w-[29px] items-center justify-center border-r border-[#555]">
        <div className="flex h-[13px] w-[15px] rounded-[2px] border-2 border-[#777] pl-[1px]">
          <div className="h-full w-[4px] bg-[#777]" />
        </div>
      </div>
      <div className="flex pl-[6.6px]">
        {periods.map(([label, w, color]) => (
          <span key={label} className={`whitespace-nowrap ${w} ${color ?? ""}`}>{label}</span>
        ))}
      </div>
      <div className="ml-auto flex">
        {chartTools.map(([label, w]) => (
          <span key={label} className={`whitespace-nowrap border-l border-[#666] text-center ${w}`}>{label}</span>
        ))}
      </div>
    </div>
  );
}

const indicators: [string, string, string?][] = [
  ["指标A", "w-[52px]"],["窗口", "w-[40px]"],["MACD", "w-[56px] text-[16px]"],["DMI", "w-[39.5px] text-[16px]"],["DMA", "w-[47.2px] text-[16px]"],["FSL", "w-[34.9px] text-[16px]"],["TRIX", "w-[42.8px] text-[16px]"],["BRAR", "w-[49px] text-[16px]"],
  ["CR", "w-[30.6px] text-[16px]"],["VR", "w-[30.7px] text-[16px]"],["OBV", "w-[41.6px] text-[16px]"],["ASI", "w-[34.9px] text-[16px]"],["EMV", "w-[41px] text-[16px]"],["RSI", "w-[34.3px] text-[16px]"],["VOL-TDX-120", "w-[108.4px] text-[16.5px]"],
  ["CCI-3", "w-[49.6px] text-[16px]", "text-[#30e0e0]"],["WR", "w-[36.1px] text-[16px]"],["SAR", "w-[39.8px] text-[16px]"],["KDJ", "w-[36.8px] text-[16px]"],["ROC", "w-[42.8px] text-[16px]"],["MTM", "w-[47.8px] text-[16px]"],["BOLL", "w-[47px] text-[16px]"],
  ["PSY", "w-[37.2px] text-[16px]"],["MCST", "w-[53.4px] text-[16px]"],["龙韵", "w-[38.6px]"],["分时SB点", "w-[73.5px]"],["赫尔均线", "w-[69.8px]"],["更多", "w-[40.4px]"],["设置", "w-[39.3px]"],
];

function IndicatorBar() {
  return (
    <div className="flex h-[21px] border-y border-[#666] bg-black text-[15px] leading-[19px] text-[#b4b4b4]">
      {indicators.map(([label, w, color]) => (
        <span key={label} className={`whitespace-nowrap border-r border-[#555] text-center ${w} ${color ?? ""}`}>{label}</span>
      ))}
      <div className="ml-auto flex">
        <span className="w-[54px] border-x border-[#555] text-center">指标B</span>
        <span className="w-[51px] border-r border-[#555] text-center">模 板</span>
        <span className="w-[31px] border-r border-[#555] text-center text-[#888]">+</span>
        <span className="w-[33px] text-center text-[#888]">-</span>
      </div>
    </div>
  );
}

const tabs: [string, string][] = [
  ["自选股", "w-[58px]"],["医药", "w-[49px]"],["北京板块", "w-[76.6px]"],["英雄榜", "w-[64.7px] text-[#f00000]"],["生物疫苗", "w-[76px]"],["创新药", "w-[64.7px]"],
  ["幽门螺杆菌", "w-[92px]"],["新冠检测", "w-[76.4px]"],["沪股通标的", "w-[92px]"],["融资融券", "w-[79.6px]"],["非周期股", "w-[73.4px]"],["大盘股", "w-[66px]"],["近期新低", "w-[76.5px]"],["MSCI成份", "w-[92px]"],
];

function TabBar() {
  return (
    <div className="flex h-[24px] items-center border-b border-[#666] bg-black pl-[3px]">
      <span className="flex h-[20px] w-[83px] shrink-0 items-center justify-center whitespace-nowrap bg-[#b00808] text-[15px] font-bold text-white [clip-path:polygon(0_0,100%_0,calc(100%-12px)_100%,11px_100%)]">
        关联品种
      </span>
      {tabs.map(([label, w]) => (
        <span
          key={label}
          className={`flex h-[20px] shrink-0 items-center justify-center whitespace-nowrap bg-[#a2a2a2] text-[14.5px] font-bold text-[#0a0a0a] [clip-path:polygon(5px_0,calc(100%-7px)_0,100%_50%,calc(100%-4px)_100%,0_100%)] ${w}`}
        >
          {label}
        </span>
      ))}
      <div className="ml-[3px] flex h-[21px] w-[16px] items-center justify-center border border-[#333] text-[#666]">
        <div className="h-0 w-0 border-y-[5px] border-r-[6px] border-y-transparent border-r-[#777]" />
      </div>
      <div className="ml-[1px] h-[21px] w-[48px] bg-[#444]" />
      <div className="ml-[655px] flex h-[21px] w-[16px] items-center justify-center border border-[#333]">
        <div className="h-0 w-0 border-y-[5px] border-l-[6px] border-y-transparent border-l-[#777]" />
      </div>
    </div>
  );
}

const infoTabs: [string, string, string][] = [
  ["扩展∨", "w-[48px]", "text-[#a8a8a8]"],["关联报价", "w-[71.5px]", "text-[#30e0e0]"],["交易查询", "w-[69.2px]", "text-[#a8a8a8]"],["资金流向", "w-[70.3px]", "text-[#a8a8a8]"],
  ["综合资讯", "w-[70.6px]", "text-[#a8a800]"],["板块资讯", "w-[69.8px]", "text-[#a8a800]"],
];

function InfoBar() {
  return (
    <div className="flex h-[23px] border-b border-[#666] bg-black text-[15px] leading-[21px]">
      {infoTabs.map(([label, w, color]) => (
        <span key={label} className={`whitespace-nowrap border-r border-[#555] text-center ${w} ${color}`}>{label}</span>
      ))}
      <div className="ml-auto flex text-[#a8a800]">
        <span className="w-[60px] border-l border-[#555] text-center">图文F10</span>
        <span className="w-[65px] border-l border-[#555] text-center">侧边栏《</span>
      </div>
    </div>
  );
}

function RedIcon({ children }: { children: ReactNode }) {
  return (
    <span className="flex h-[18px] w-[18px] items-center justify-center rounded-[2px] bg-[#ee3030] text-[11px] font-bold leading-none text-white">
      {children}
    </span>
  );
}

const shortcuts: [string, string, ReactNode][] = [
  ["自选股", "w-[89px]", "★"],["买入", "w-[75px]", "买"],["卖出", "w-[75px]", "卖"],["撤单", "w-[75.5px]", "撤"],["资产全景", "w-[105.5px]", "◎"],["银证转账", "w-[150px]", "▣"],
];

const quotes: [string, string, string][] = [
  ["上证", "w-[33px]", "text-[#222]"],["3457.11", "w-[73.4px]", "text-[#0a8a14]"],["-0.64", "w-[52px]", "text-[#0a8a14]"],["-0.02%", "w-[56.5px]", "text-[#0a8a14]"],["3385亿", "w-[58.5px]", "text-[#222]"],
  ["创业", "w-[32.8px]", "text-[#222]"],["2128.74", "w-[68.2px]", "text-[#0a8a14]"],["-19.18", "w-[58px]", "text-[#0a8a14]"],["-0.89%", "w-[55.6px]", "text-[#0a8a14]"],["2557亿", "w-[60px]", "text-[#222]"],
  ["科创", "w-[38px]", "text-[#222]"],["985.25", "w-[68.4px]", "text-[#0a8a14]"],["-9.55", "w-[52px]", "text-[#0a8a14]"],["-0.96%", "w-[58.4px]", "text-[#0a8a14]"],["146.9亿", "w-[66.6px]", "text-[#222]"],
];

function MiniBars() {
  return (
    <div className="ml-[3px] flex w-[60px] flex-col gap-[2px]">
      <div className="flex h-[7px] pl-[14px]">
        <div className="w-[13px] bg-[#e01010]" />
        <div className="w-[17px] bg-[#0a8a14]" />
      </div>
      {[0, 1].map((row) => (
        <div key={row} className="flex gap-[1px]">
          {[0, 1, 2, 3, 4, 5].map((i) => (
            <div key={i} className="h-[3px] w-[9px] bg-[#0a8a14]" />
          ))}
        </div>
      ))}
    </div>
  );
}

function StatusPanel() {
  return (
    <div className="h-[55px] bg-white text-[15px] text-[#222]">
      <div className="flex h-[29px] items-center pl-[9px]">
        {shortcuts.map(([label, w, glyph]) => (
          <div key={label} className={`flex shrink-0 items-center ${w}`}>
            <RedIcon>{glyph}</RedIcon>
            <span className="ml-[7px] whitespace-nowrap">{label}</span>
          </div>
        ))}
        <div className="ml-[326px] flex h-[13px] w-[14px] shrink-0 items-center justify-center bg-[#e8e8e8] text-[11px] leading-none text-[#777]">+</div>
        <div className="ml-[21px] flex w-[939px] shrink-0 justify-between overflow-hidden whitespace-nowrap text-[#1f66d0]">
          <span className="-ml-[9px]">真实、准确、完整和及时性。您须通过证监会指定披露媒体查阅相关信息，并自担投资风险。</span>
          <span className="w-[35px] overflow-hidden">本软件</span>
        </div>
      </div>
      <div className="flex h-[24px] items-center pl-[5px]">
        <span className="flex h-[14px] w-[17px] flex-col items-center justify-center rounded-[2px] bg-[#ee3030] text-[9px] font-bold leading-[5px] text-white">
          <span>∨</span>
          <span>∨</span>
        </span>
        <div className="ml-[10.6px] flex">
          {quotes.map(([label, w, color], i) => (
            <span key={i} className={`whitespace-nowrap ${w} ${color}`}>{label}</span>
          ))}
        </div>
        <MiniBars />
        <MiniBars />
        <span className="ml-[9px] flex h-[14px] w-[15px] items-center justify-center bg-[#999] text-[12px] text-white">3</span>
        <span className="ml-[6px]">已连接</span>
        <div className="ml-[602px] flex items-center gap-[20px]">
          <svg width="20" height="17" viewBox="0 0 20 17">
            <rect width="20" height="17" rx="2" fill="#3b4258" />
            <path d="M3 5h14M3 8h14M6 11.5h8" stroke="#dfe2ea" strokeWidth="1.6" strokeDasharray="2 1" />
          </svg>
          <svg width="18" height="17" viewBox="0 0 18 17">
            <rect width="18" height="14" fill="#3b4258" />
            <path d="M3 10l4-4 3 2 5-5" fill="none" stroke="#fff" />
            <path d="M5 16h8" stroke="#3b4258" strokeWidth="1.6" />
          </svg>
          <svg width="15" height="17" viewBox="0 0 15 17">
            <path d="M3 1c2 1 3 3 4 5l3-4 1 5c2 2 1 5-1 6l2 4H7l-1-3C2 13 1 8 3 1z" fill="#3b4258" />
          </svg>
          <svg width="17" height="18" viewBox="0 0 17 18">
            <path d="M5 7a3.5 3.5 0 0 1 7 0v8H5z" fill="#ee2020" />
            <rect x="3" y="15" width="11" height="3" fill="#ee2020" />
            <path d="M8.5 0v2M2 3l2 1.6M15 3l-2 1.6" stroke="#ee2020" />
          </svg>
        </div>
        <span className="ml-[18px] whitespace-nowrap">13:05:37</span>
      </div>
    </div>
  );
}

function BehindStrip() {
  return (
    <div className="relative h-[5px] overflow-hidden border-t border-[#aaa] bg-[#f4f4f4] text-[14px] leading-[18px] text-[#1d3f7a]">
      <span className="absolute left-[266px] top-0">11</span>
      <span className="absolute left-[447px] top-0 whitespace-nowrap">次行 指标数据6块9小开进9于 0.45 9成交比</span>
      <span className="absolute left-[1015px] top-0 whitespace-nowrap">多个工作公司服务</span>
      <span className="absolute left-[1202px] top-0 whitespace-nowrap">07-02 12:26</span>
    </div>
  );
}

function SideCell({ children }: { children: ReactNode }) {
  return <div className="flex h-[27.5px] items-center justify-center">{children}</div>;
}

function BoxIcon({ children, border = "#6aa4f4" }: { children: ReactNode; border?: string }) {
  return (
    <svg width="19" height="19" viewBox="0 0 19 19">
      <rect x="0.75" y="0.75" width="17.5" height="17.5" fill="#fff" stroke={border} strokeWidth="1.5" />
      {children}
    </svg>
  );
}

const ARROW = "#3c8ee8";
const sideItems: ReactNode[] = [
  <svg key="l" width="19" height="15" viewBox="0 0 19 15"><path d="M1 7.5L8 1v3.5h10v6H8V14z" fill="#fff" stroke={ARROW} strokeWidth="1.3" /></svg>,
  <svg key="u" width="15" height="19" viewBox="0 0 15 19"><path d="M7.5 1L14 8h-3.5v10h-6V8H1z" fill="#fff" stroke={ARROW} strokeWidth="1.3" /></svg>,
  <svg key="d" width="15" height="19" viewBox="0 0 15 19"><path d="M7.5 18L14 11h-3.5V1h-6v10H1z" fill="#fff" stroke={ARROW} strokeWidth="1.3" /></svg>,
  <BoxIcon key="a"><path d="M3 5h5M3 8h5M3 11h5" stroke="#1a9a3a" strokeWidth="1.4" /><path d="M10 5h6M10 8h6" stroke="#e03030" strokeWidth="1.4" /><circle cx="13" cy="13" r="3" fill="#999" /></BoxIcon>,
  <BoxIcon key="b"><path d="M3 5h4M3 8h4M3 11h4M3 14h4" stroke="#e02020" strokeWidth="1.5" /><path d="M8 5h3M8 8h3M8 11h3M8 14h3" stroke="#1a9a3a" strokeWidth="1.5" /><path d="M12 5h4M12 8h4M12 11h4M12 14h4" stroke="#2040d0" strokeWidth="1.5" /></BoxIcon>,
  <BoxIcon key="c"><polyline points="2,14 6,10 9,12 13,7 17,5" fill="none" stroke="#e02020" strokeWidth="1.5" /></BoxIcon>,
  <BoxIcon key="e"><path d="M4.5 5v11M9.5 3v12M14.5 2v10" stroke="#444" /><rect x="3" y="8" width="3" height="5" fill="#e02020" /><rect x="8" y="6" width="3" height="7" fill="#1a9a3a" /><rect x="13" y="4" width="3" height="5" fill="#e02020" /></BoxIcon>,
  <svg key="f" width="20" height="19" viewBox="0 0 20 19"><rect x="5" y="1" width="14" height="12" fill="#fff" stroke="#6aa4f4" /><rect x="1" y="5" width="14" height="13" fill="#fff" stroke="#6aa4f4" /><path d="M3 9h10M3 12h10M3 15h10" stroke="#777" strokeWidth="1.4" strokeDasharray="4 1" /></svg>,
  <BoxIcon key="g"><text x="9.5" y="13.5" fontSize="10" fontWeight="700" textAnchor="middle" fill="#1f4fb0">F10</text></BoxIcon>,
  <BoxIcon key="h"><rect x="3" y="3" width="6" height="4" fill="#f0b030" /><rect x="10" y="8" width="6" height="3.4" fill="#f0b030" /><rect x="10" y="13" width="6" height="3.4" fill="#f0b030" /><path d="M5 7v8h5M5 10h5" fill="none" stroke="#6aa4f4" /></BoxIcon>,
  <BoxIcon key="i" border="#f0a060"><text x="9.5" y="14" fontSize="12" fontWeight="700" textAnchor="middle" fill="#f06a20">自</text></BoxIcon>,
  <BoxIcon key="j"><text x="9.5" y="13.5" fontSize="10" fontWeight="700" textAnchor="middle" fill="#1f4fb0">F12</text></BoxIcon>,
  <BoxIcon key="k" border="#2a8a8a"><text x="9.5" y="13.5" fontSize="10" fontStyle="italic" textAnchor="middle" fill="#1f4fb0">f(x)</text></BoxIcon>,
  <BoxIcon key="m"><circle cx="9.5" cy="9.5" r="4.4" fill="none" stroke="#1f4fb0" strokeWidth="1.6" /></BoxIcon>,
  "sep",
  <BoxIcon key="n"><path d="M3 8l2-2 2 2 2-2 2 2 2-2 2 2" fill="none" stroke="#e02020" /><path d="M3 13l2-2 2 2 2-2 2 2 2-2 2 2" fill="none" stroke="#2040d0" /></BoxIcon>,
  <span key="rsi" className="text-[14px] font-extrabold tracking-[-1px] text-[#3454b4]">RSI</span>,
  <svg key="s" width="14" height="20" viewBox="0 0 14 20"><path d="M7 0l3 4H4z" fill="#d84040" /><text x="7" y="18" fontSize="17" fontWeight="800" textAnchor="middle" fill="#d84040">S</text></svg>,
  <svg key="mv" width="19" height="19" viewBox="0 0 19 19"><path d="M9.5 0L13 4H6zM9.5 19L13 15H6zM0 9.5L4 6v7zM19 9.5L15 6v7z" fill="#1a5ab8" /><circle cx="9.5" cy="9.5" r="3.6" fill="#1a5ab8" /></svg>,
  <svg key="pen" width="17" height="20" viewBox="0 0 17 20"><path d="M11 2l4 3L5 18l-4 1 0-4z" fill="#f0b040" stroke="#b87820" strokeWidth="0.6" /><path d="M11 2l4 3 1-2-3-2z" fill="#e08070" /></svg>,
  "sep",
  <BoxIcon key="f5"><text x="9.5" y="14" fontSize="11" fontWeight="700" textAnchor="middle" fill="#1f4fb0">F5</text></BoxIcon>,
  <BoxIcon key="r" border="#8ab4f4"><rect x="2" y="2" width="15" height="15" fill="#a8d890" /><path d="M5 9a4.5 4.5 0 0 1 8-2M14 10a4.5 4.5 0 0 1-8 2" fill="none" stroke="#fff" strokeWidth="2" /></BoxIcon>,
];

const sideLabels = ["1", "5", "15", "30", "60", "日", "周", "月", "N", "多", "季", "年"];

function Sidebar() {
  return (
    <div className="flex w-[32px] flex-col border-l-2 border-[#d4d4d4] bg-[#f1f1f1]">
      {sideItems.map((item, i) =>
        item === "sep" ? (
          <div key={i} className="flex h-[10px] items-center px-[3px]">
            <div className="h-[1px] w-full bg-[#aaa]" />
          </div>
        ) : (
          <SideCell key={i}>{item}</SideCell>
        ),
      )}
      {sideLabels.map((label) =>
        label === "日" ? (
          <div key={label} className="flex h-[27.5px] items-center justify-center border-y border-l border-[#bbb] bg-white text-[15px] text-[#1f3fa0]">
            {label}
          </div>
        ) : (
          <SideCell key={label}>
            <span className="text-[15px] text-[#1f3fa0]">{label}</span>
          </SideCell>
        ),
      )}
    </div>
  );
}

function ArrowOverlay() {
  return (
    <svg viewBox="0 0 1920 1032" className="pointer-events-none absolute left-0 top-0 z-10 h-[1032px] w-[1920px]">
      {arrows.map(([tx, ty, hy, hl, hr, sl, sr, b]) => (
        <polygon
          key={tx}
          points={`${tx},${ty} ${hr},${hy} ${sr},${hy} ${sr},${b} ${sl},${b} ${sl},${hy} ${hl},${hy}`}
          fill="none"
          stroke="#ffff00"
          strokeWidth="3.8"
          strokeLinejoin="round"
        />
      ))}
    </svg>
  );
}

const imeGlyphs = ["中", "♪", "°,", "简", "☺", ":"];

function ImeBar() {
  return (
    <div className="absolute left-[1358px] top-[1013px] z-20 flex h-[19px] w-[189px] items-center bg-white pl-[12px] text-[15px] font-bold leading-none text-black">
      <span className="mr-[8px] w-[16px] border border-[#999] bg-[#eee] text-center text-[13px] font-normal">拼</span>
      {imeGlyphs.map((g) => (
        <span key={g} className="w-[27px] text-center">{g}</span>
      ))}
    </div>
  );
}

export default function App() {
  return (
    <div className="relative flex h-[1032px] w-[1920px] flex-col overflow-hidden bg-black [font-family:'Noto_Sans_CJK_SC','Noto_Sans',sans-serif]">
      <Toolbar />
      <div className="flex h-[964px]">
        <div className="w-[6px] bg-[#dfe0e3]" />
        <div className="flex w-[1882px] flex-col">
          <PeriodBar />
          <div className="border-b-2 border-[#555]">
            <MainChart />
          </div>
          <div className="border-b-2 border-[#555]">
            <VolumeChart />
          </div>
          <div className="border-b border-[#444]">
            <CciChart />
          </div>
          <TimeAxis />
          <IndicatorBar />
          <TabBar />
          <InfoBar />
          <StatusPanel />
          <BehindStrip />
        </div>
        <Sidebar />
      </div>
      <ArrowOverlay />
      <ImeBar />
    </div>
  );
}
